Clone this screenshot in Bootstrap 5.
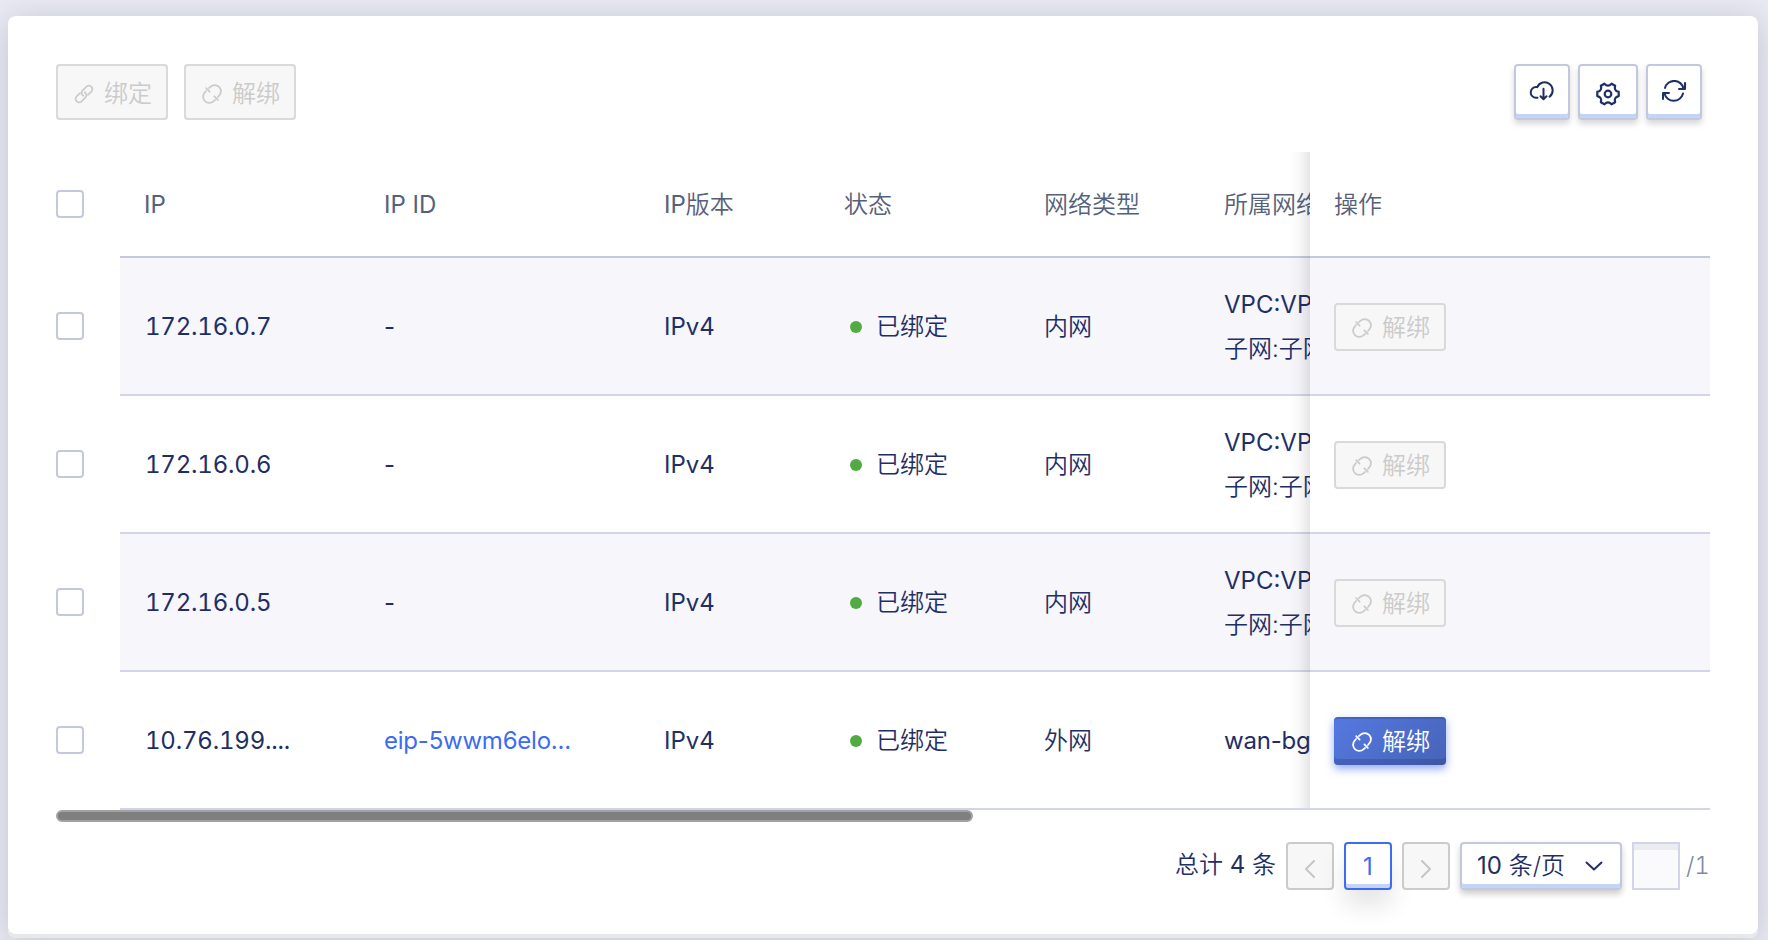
<!DOCTYPE html>
<html lang="zh-CN">
<head>
<meta charset="utf-8">
<meta name="viewport" content="width=device-width, initial-scale=1">
<title>IP 列表</title>
<link href="https://cdn.jsdelivr.net/npm/bootstrap@5.3.0/dist/css/bootstrap.min.css" rel="stylesheet">
<style>
  :root { --ink: #1f2f66; --edge: #c3c8dc; --rule: #d2d4ea; --tint: #c4d4f7; }
  html, body { height: 100%; overflow: hidden; }
  body { background: #e9eaf4; color: var(--ink); font-family: Inter, "Noto Sans CJK SC", sans-serif; font-size: 24px; line-height: 44px; font-weight: 350; padding: 16px 10px 0 8px; }
  svg { display: block; fill: none; stroke: currentColor; stroke-linecap: round; stroke-linejoin: round; flex: none; }
  .lat { font-weight: 400; }
  .panel { height: 922px; border: 0; border-radius: 8px; padding: 48px 48px 0; background: #fff; box-shadow: inset 0 -4px 0 #e8e8ea, 0 4px 32px rgba(80,84,100,.26); }
  .btn { --bs-btn-border-radius: 4px; --bs-btn-border-width: 2px; --bs-btn-font-size: 24px; --bs-btn-line-height: 1; --bs-btn-font-weight: 350; white-space: nowrap; }
  .btn-act { height: 48px; width: 112px; padding: 2px 0 0 16px; gap: 10px; }
  .btn-tall { height: 56px; padding-top: 3px; }
  .btn-act:disabled { color: #cbcbcb; background: #f7f7f7; border-color: #d9d9d9; opacity: 1; }
  .btn-go { color: #fff; border: 0; padding-left: 18px; background: linear-gradient(135deg, #5479df, #4763b8); box-shadow: inset 0 2px 0 rgba(45,65,135,.35), inset 0 -6px 0 rgba(45,65,135,.35), 0 4px 8px rgba(60,100,235,.55); }
  .btn-tool { height: 56px; width: 56px; padding: 0 0 2px; color: var(--ink); background: #fff; border-color: var(--edge); box-shadow: inset 0 -4px 0 var(--tint), 0 4px 6px rgba(0,0,0,.16); }
  .btn-gear { width: 60px; padding: 4px 0 0; }
  .form-check-input.pick-box { width: 28px; height: 28px; margin: 0 0 2px; border: 2px solid var(--edge); border-radius: 4px; display: block; float: none; }
  .ip-list { margin-top: 32px; }
  .ip-row { height: 138px; }
  .ip-head { height: 106px; color: #55617a; }
  .pick { width: 64px; flex: none; }
  .cells { border-bottom: 2px solid var(--rule); min-width: 0; padding-top: 2px; }
  .ip-head .cells { border-color: #c5cadb; }
  .striped .cells { background: #f6f6fb; }
  .cell { padding-left: 24px; flex: none; white-space: nowrap; }
  .w-ip { width: 240px; } .w-id { width: 280px; } .w-ver { width: 180px; } .w-st { width: 200px; } .w-type { width: 180px; }
  .w-net { width: 110px; overflow: hidden; }
  .w-net.lat { letter-spacing: -.2px; }
  .w-ops { width: 400px; }
  .num { font-variant-numeric: tabular-nums; padding-left: 1px; letter-spacing: -.2px; }
  .eip { color: #3d6cf2; letter-spacing: -.22px; }
  .dot { width: 12px; height: 12px; border-radius: 50%; background: #52ab42; margin: 0 14px 0 6px; }
  .fade-edge { position: absolute; left: 1232px; width: 22px; top: 0; height: 656px; background: linear-gradient(90deg, rgba(0,0,0,0), rgba(0,0,0,.025) 50%, rgba(0,0,0,.1)); }
  .scroll-thumb { width: 917px; height: 12px; border-radius: 6px; border: 2px solid #a2a2a2; background: #7f7f7f; }
  .pager { margin-top: 20px; gap: 10px; line-height: 44px; }
  .total { padding-bottom: 2px; }
  .pg { height: 48px; width: 48px; padding: 0; }
  .pg:disabled { opacity: 1; color: #c5c5c5; background: #f7f7f7; border-color: #cbcbcb; padding-top: 6px; }
  .pg-now { color: #3d6cf2; border-color: #3d6cf2; background: #fff; padding-top: 2px; box-shadow: inset 0 -4px 0 var(--tint), 0 16px 24px rgba(0,0,0,.1); }
  .size-box { width: 162px; height: 48px; padding: 0 17px 0 15px; border: 2px solid var(--edge); border-radius: 4px; box-shadow: inset 0 -4px 0 var(--tint), 0 4px 6px rgba(0,0,0,.2); line-height: 42px; }
  .jump { width: 48px; height: 48px; padding: 0; border: 2px solid #d2d4ea; border-radius: 0; background: #fafafd; box-shadow: inset 0 6px 0 #ececf0; }
  .pages { color: #7c89a9; width: 24px; margin-left: -4px; white-space: nowrap; font-variant-numeric: tabular-nums; }
</style>
<script src="https://cdn.jsdelivr.net/npm/bootstrap@5.3.0/dist/js/bootstrap.bundle.min.js"></script>
</head>
<body>
<svg width="0" height="0" class="position-absolute">
  <symbol id="i-bind" viewBox="0 0 20 20"><path d="M9.300 11.800A3.500 3.500 0 0 1 8.400 6.700L12.700 2.400A3.500 3.500 0 0 1 17.600 7.300L14 10.900M10.700 8.200A3.500 3.500 0 0 1 11.600 13.300L7.300 17.600A3.500 3.500 0 0 1 2.400 12.700L6 9.100"/></symbol>
  <symbol id="i-unbind" viewBox="0 0 20 20"><path d="M7 4 8.300 2.900a6.100 6.100 0 0 1 8.800 8.800L16 13M4 7 2.900 8.300a6.100 6.100 0 0 0 8.800 8.800L13 16M4.200 4.200l3.400 3.400M12.400 12.400l3.400 3.400"/></symbol>
</svg>
<main class="card panel">
  <div class="d-flex justify-content-between">
    <div class="d-flex gap-3">
      <button class="btn btn-act btn-tall d-flex align-items-center" disabled><svg width="20" height="20" stroke-width="1.7"><use href="#i-bind"/></svg>绑定</button>
      <button class="btn btn-act btn-tall d-flex align-items-center" disabled><svg width="20" height="20" stroke-width="1.8"><use href="#i-unbind"/></svg>解绑</button>
    </div>
    <div class="d-flex gap-2 pe-2">
      <button class="btn btn-tool d-flex align-items-center justify-content-center" aria-label="下载"><svg width="26" height="22" viewBox="0 0.8 26 22" stroke-width="2"><path d="M8.500 18.500H7a5.300 5.300 0 0 1 0-10.600h1.300M8.300 8a8 8 0 1 1 12.200 9.500M14.500 9.500V19.500M11.500 17l3 3 3-3"/></svg></button>
      <button class="btn btn-tool btn-gear d-flex align-items-center justify-content-center" aria-label="设置"><svg width="26" height="26" viewBox="0 0 26 26" stroke-width="2.200"><path d="M23.700 10.900V15.100Q18.600 16.300 20.150 21.200L16.550 23.300Q13 19.500 9.450 23.300L5.850 21.200Q7.400 16.300 2.300 15.100V10.900Q7.400 9.700 5.850 4.800L9.450 2.700Q13 6.500 16.550 2.700L20.150 4.800Q18.600 9.700 23.700 10.900Z"/><circle cx="13" cy="13" r="3.300"/></svg></button>
      <button class="btn btn-tool d-flex align-items-center justify-content-center" aria-label="刷新"><svg width="26" height="22" viewBox="0 0 26 22" stroke-width="2"><path d="M4 8a9.500 9.500 0 0 1 18.500.5M24 3v6h-6M22 13.500a9.500 9.500 0 0 1-18.500 0M2 19v-6h6"/></svg></button>
    </div>
  </div>

  <div class="ip-list position-relative">
    <div class="ip-row ip-head d-flex">
      <div class="pick d-flex align-items-center"><input class="form-check-input pick-box" type="checkbox" aria-label="全选"></div>
      <div class="cells d-flex align-items-center flex-grow-1">
        <div class="cell w-ip lat">IP</div><div class="cell w-id lat">IP ID</div><div class="cell w-ver"><span class="lat">IP</span>版本</div><div class="cell w-st">状态</div><div class="cell w-type">网络类型</div><div class="cell w-net">所属网络</div><div class="cell w-ops">操作</div>
      </div>
    </div>
    <div class="ip-row striped d-flex">
      <div class="pick d-flex align-items-center"><input class="form-check-input pick-box" type="checkbox" aria-label="选择"></div>
      <div class="cells d-flex align-items-center flex-grow-1">
        <div class="cell w-ip lat"><span class="num">172.16.0.7</span></div><div class="cell w-id lat">-</div><div class="cell w-ver lat">IPv4</div><div class="cell w-st d-flex align-items-center"><span class="dot"></span>已绑定</div><div class="cell w-type">内网</div><div class="cell w-net"><span class="lat">VPC:VPC</span><br>子网:子网</div>
        <div class="cell w-ops"><button class="btn btn-act d-flex align-items-center" disabled><svg width="20" height="20" stroke-width="1.8"><use href="#i-unbind"/></svg>解绑</button></div>
      </div>
    </div>
    <div class="ip-row d-flex">
      <div class="pick d-flex align-items-center"><input class="form-check-input pick-box" type="checkbox" aria-label="选择"></div>
      <div class="cells d-flex align-items-center flex-grow-1">
        <div class="cell w-ip lat"><span class="num">172.16.0.6</span></div><div class="cell w-id lat">-</div><div class="cell w-ver lat">IPv4</div><div class="cell w-st d-flex align-items-center"><span class="dot"></span>已绑定</div><div class="cell w-type">内网</div><div class="cell w-net"><span class="lat">VPC:VPC</span><br>子网:子网</div>
        <div class="cell w-ops"><button class="btn btn-act d-flex align-items-center" disabled><svg width="20" height="20" stroke-width="1.8"><use href="#i-unbind"/></svg>解绑</button></div>
      </div>
    </div>
    <div class="ip-row striped d-flex">
      <div class="pick d-flex align-items-center"><input class="form-check-input pick-box" type="checkbox" aria-label="选择"></div>
      <div class="cells d-flex align-items-center flex-grow-1">
        <div class="cell w-ip lat"><span class="num">172.16.0.5</span></div><div class="cell w-id lat">-</div><div class="cell w-ver lat">IPv4</div><div class="cell w-st d-flex align-items-center"><span class="dot"></span>已绑定</div><div class="cell w-type">内网</div><div class="cell w-net"><span class="lat">VPC:VPC</span><br>子网:子网</div>
        <div class="cell w-ops"><button class="btn btn-act d-flex align-items-center" disabled><svg width="20" height="20" stroke-width="1.8"><use href="#i-unbind"/></svg>解绑</button></div>
      </div>
    </div>
    <div class="ip-row d-flex">
      <div class="pick d-flex align-items-center"><input class="form-check-input pick-box" type="checkbox" aria-label="选择"></div>
      <div class="cells d-flex align-items-center flex-grow-1">
        <div class="cell w-ip lat"><span class="num">10.76.199....</span></div><div class="cell w-id lat eip">eip-5wwm6elo...</div><div class="cell w-ver lat">IPv4</div><div class="cell w-st d-flex align-items-center"><span class="dot"></span>已绑定</div><div class="cell w-type">外网</div><div class="cell w-net lat">wan-bgp</div>
        <div class="cell w-ops"><button class="btn btn-act btn-go d-flex align-items-center"><svg width="20" height="20" stroke-width="1.8"><use href="#i-unbind"/></svg>解绑</button></div>
      </div>
    </div>
    <div class="fade-edge"></div>
  </div>
  <div class="scroll-thumb"></div>

  <div class="pager d-flex justify-content-end align-items-center">
    <span class="total">总计 <span class="lat">4</span> 条</span>
    <button class="btn pg d-flex align-items-center justify-content-center" disabled aria-label="上一页"><svg width="10" height="18" viewBox="0 0 10 18" stroke-width="2"><path d="M9 1 1 9l8 8"/></svg></button>
    <button class="btn pg pg-now lat">1</button>
    <button class="btn pg d-flex align-items-center justify-content-center" disabled aria-label="下一页"><svg width="10" height="18" viewBox="0 0 10 18" stroke-width="2"><path d="m1 1 8 8-8 8"/></svg></button>
    <div class="size-box d-flex align-items-center justify-content-between"><span><span class="lat">10</span> 条/页</span><svg width="18" height="10" viewBox="0 0 18 10" stroke-width="2"><path d="m1.500 1.500 7.500 7 7.500-7"/></svg></div>
    <input class="form-control jump" type="text" aria-label="页码">
    <span class="pages">/1</span>
  </div>
</main>
</body>
</html>
